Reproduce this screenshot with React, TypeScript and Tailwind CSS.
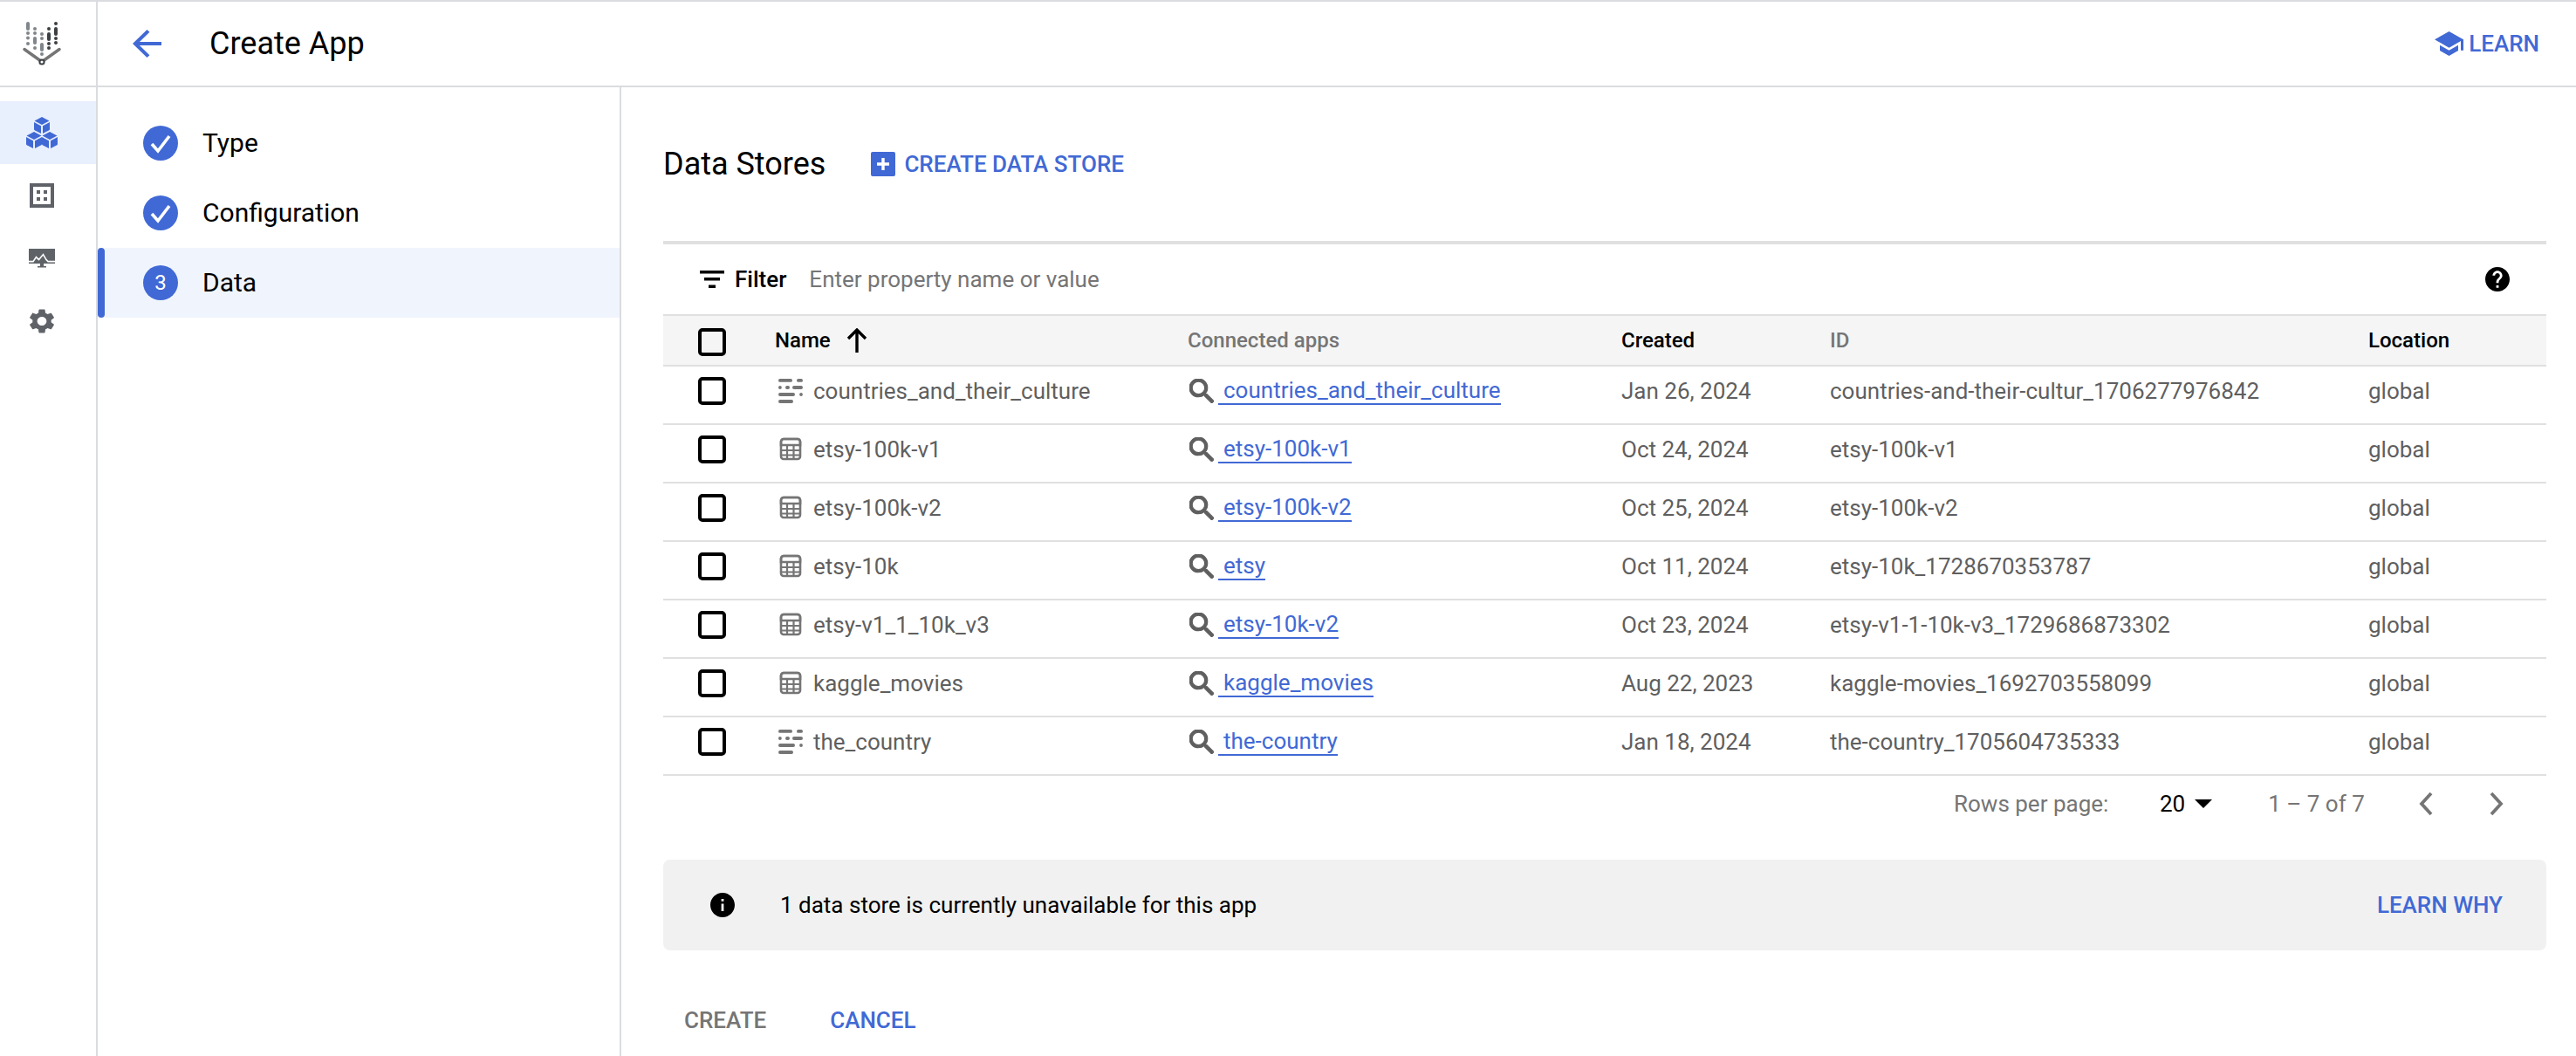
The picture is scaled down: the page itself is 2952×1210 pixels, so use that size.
import React from "react";

const BLUE = "#4169d5";

function Check() {
  return (
    <svg width="40" height="40" viewBox="0 0 40 40" className="block">
      <circle cx="20" cy="20" r="20" fill={BLUE} />
      <path d="M10 21l7 8 13-17" fill="none" stroke="#fff" strokeWidth="3.6" />
    </svg>
  );
}

function Logo() {
  const light = "#80868b";
  const dark = "#3c4043";
  const dots: [number, number, string][] = [
    [32, 38, light], [32, 43.5, light], [32, 50, light],
    [40, 33, light], [40, 38, light], [40, 55, light],
    [48, 39, light], [48, 44, light], [48, 62, light],
    [56, 33, dark], [56, 50, dark], [56, 55, dark],
    [64, 27, dark], [64, 44, dark], [64, 49, dark],
  ];
  const bars: [number, number, number, string][] = [
    [32, 27, 33, light], [40, 44, 49, light], [48, 51, 57, light], [56, 39, 45, dark], [64, 33, 39, dark],
  ];
  return (
    <svg width="44" height="50" viewBox="26 25 44 50" className="block">
      {dots.map(([x, y, c], i) => <circle key={i} cx={x} cy={y} r="2" fill={c} />)}
      {bars.map(([x, a, b, c], i) => <line key={i} x1={x} y1={a} x2={x} y2={b} stroke={c} strokeWidth="4" strokeLinecap="round" />)}
      <path d="M28 56.5L45.5 69M68 56.5L50.5 69" stroke="#757575" strokeWidth="3.4" strokeLinecap="round" fill="none" />
      <circle cx="48" cy="71" r="2.6" fill="#fff" stroke="#3c4043" strokeWidth="2" />
    </svg>
  );
}

function Cubes() {
  const cube = (x: number, y: number) => (
    <g transform={`translate(${x} ${y})`}>
      <path d="M9 0l8.5 4.6L9 9 .5 4.6z" />
      <path d="M0 6l8 4.2V19L1.2 15.6Q0 15 0 14z" />
      <path d="M18 6l-8 4.2V19l6.8-3.4Q18 15 18 14z" />
    </g>
  );
  return (
    <svg width="36" height="36" viewBox="0 0 36 36" fill={BLUE} className="block">
      {cube(9, 0)}
      {cube(0, 17)}
      {cube(18, 17)}
    </svg>
  );
}

function Building() {
  return (
    <svg width="28" height="28" viewBox="0 0 28 28" className="block">
      <path fillRule="evenodd" fill="#5f6368" d="M0 0h28v28H0zM4 4v20h20V4z" />
      <path fill="#5f6368" d="M8 8h4v4H8zM16 8h4v4h-4zM8 16h4v4H8zM16 16h4v4h-4z" />
    </svg>
  );
}

function Monitor() {
  return (
    <svg width="30" height="22" viewBox="0 0 30 22" className="block">
      <path fill="#5f6368" d="M0 0h30v17H0zM13 17h4v3h-4zM10 20h10v1.6H10z" />
      <path fill="none" stroke="#fff" strokeWidth="1.6" d="M0 14.6h5l3.5-5 3 3 5-6 3.5 6 2 2H30" />
    </svg>
  );
}

function Gear() {
  return (
    <svg width="28" height="28" viewBox="2.6 2 18.8 20" fill="#5f6368" preserveAspectRatio="none" className="block">
      <path d="M19.14 12.94c.04-.3.06-.61.06-.94 0-.32-.02-.64-.07-.94l2.03-1.58c.18-.14.23-.41.12-.61l-1.92-3.32c-.12-.22-.37-.29-.59-.22l-2.39.96c-.5-.38-1.03-.7-1.62-.94l-.36-2.54c-.04-.24-.24-.41-.48-.41h-3.84c-.24 0-.43.17-.47.41l-.36 2.54c-.59.24-1.13.57-1.62.94l-2.39-.96c-.22-.08-.47 0-.59.22L2.74 8.87c-.12.21-.08.47.12.61l2.03 1.58c-.05.3-.09.63-.09.94s.02.64.07.94l-2.03 1.58c-.18.14-.23.41-.12.61l1.92 3.32c.12.22.37.29.59.22l2.39-.96c.5.38 1.03.7 1.62.94l.36 2.54c.05.24.24.41.48.41h3.84c.24 0 .44-.17.47-.41l.36-2.54c.59-.24 1.13-.56 1.62-.94l2.39.96c.22.08.47 0 .59-.22l1.92-3.32c.12-.22.07-.47-.12-.61l-2.01-1.58zM12 15.6c-1.98 0-3.6-1.62-3.6-3.6s1.62-3.6 3.6-3.6 3.6 1.62 3.6 3.6-1.62 3.6-3.6 3.6z" />
    </svg>
  );
}

function Checkbox() {
  return <div className="w-[32px] h-[32px] border-[4px] border-black rounded-[5px] shrink-0" />;
}

function SearchIcon() {
  return (
    <svg width="28" height="28" viewBox="3 3 17.5 17.5" fill="#5f5f5f" stroke="#5f5f5f" strokeWidth="0.7" className="block shrink-0">
      <path d="M15.5 14h-.79l-.28-.27C15.41 12.59 16 11.11 16 9.5 16 5.91 13.09 3 9.5 3S3 5.91 3 9.5 5.91 16 9.5 16c1.61 0 3.09-.59 4.23-1.57l.27.28v.79l5 4.99L20.49 19l-4.99-5zm-6 0C7.01 14 5 11.99 5 9.5S7.01 5 9.5 5 14 7.01 14 9.5 11.99 14 9.5 14z" />
    </svg>
  );
}

function ListIcon() {
  return (
    <svg width="28" height="28" viewBox="0 0 28 28" fill="#757575" className="block shrink-0">
      <rect x="0" y="0" width="16" height="3.8" rx="1.9" />
      <rect x="21" y="0" width="7" height="3.8" rx="1.9" />
      <circle cx="1.9" cy="10" r="1.9" />
      <rect x="8" y="8.1" width="5" height="3.8" rx="1.9" />
      <rect x="16" y="8.1" width="12" height="3.8" rx="1.9" />
      <rect x="0" y="16.1" width="19" height="3.8" rx="1.9" />
      <circle cx="26" cy="18" r="1.9" />
      <rect x="0" y="24.1" width="17" height="3.8" rx="1.9" />
    </svg>
  );
}

function TableIcon() {
  return (
    <svg width="28" height="28" viewBox="0 0 28 28" className="block shrink-0">
      <rect x="3" y="2" width="22" height="23" rx="3" fill="none" stroke="#757575" strokeWidth="2.6" />
      <path d="M3 9h22v-4a3 3 0 0 0-3-3H6a3 3 0 0 0-3 3z" fill="none" stroke="#757575" strokeWidth="2.6" />
      <path d="M3 15h22M3 20.5h22M10 9v16M17.5 9v16" stroke="#757575" strokeWidth="2.2" fill="none" />
    </svg>
  );
}

const COLS = "grid grid-cols-[129px_472px_497px_239px_617px_1fr]";

const rows = [
  ["list", "countries_and_their_culture", "countries_and_their_culture", "Jan 26, 2024", "countries-and-their-cultur_1706277976842"],
  ["table", "etsy-100k-v1", "etsy-100k-v1", "Oct 24, 2024", "etsy-100k-v1"],
  ["table", "etsy-100k-v2", "etsy-100k-v2", "Oct 25, 2024", "etsy-100k-v2"],
  ["table", "etsy-10k", "etsy", "Oct 11, 2024", "etsy-10k_1728670353787"],
  ["table", "etsy-v1_1_10k_v3", "etsy-10k-v2", "Oct 23, 2024", "etsy-v1-1-10k-v3_1729686873302"],
  ["table", "kaggle_movies", "kaggle_movies", "Aug 22, 2023", "kaggle-movies_1692703558099"],
  ["list", "the_country", "the-country", "Jan 18, 2024", "the-country_1705604735333"],
];

export default function App() {
  return (
    <div className="h-[1210px] w-full overflow-hidden bg-white border-t-2 border-[#dadce0] flex font-[Roboto,sans-serif] text-[26px] text-[#5f5f5f]">
      <aside className="w-[112px] shrink-0 border-r-2 border-[#dadce0] flex flex-col">
        <div className="h-[98px] border-b-2 border-[#dadce0] flex items-center justify-center pr-[14px]">
          <Logo />
        </div>
        <nav className="pt-[16px] flex flex-col">
          <div className="h-[72px] bg-[#e8f0fe] flex items-center justify-center pr-[14px]"><Cubes /></div>
          <div className="h-[72px] flex items-center justify-center pr-[14px]"><Building /></div>
          <div className="h-[72px] flex items-center justify-center pr-[14px]"><Monitor /></div>
          <div className="h-[72px] flex items-center justify-center pr-[14px]"><Gear /></div>
        </nav>
      </aside>

      <div className="flex-1 flex flex-col min-w-0">
        <header className="h-[98px] shrink-0 border-b-2 border-[#dadce0] flex items-center pl-[40px] pr-[42px]">
          <svg width="33" height="32" viewBox="4 4 16 16" fill={BLUE} preserveAspectRatio="none" className="block">
            <path d="M20 11H7.83l5.59-5.59L12 4l-8 8 8 8 1.41-1.41L7.83 13H20v-2z" />
          </svg>
          <h1 className="ml-[55px] text-[36px] text-black font-normal leading-none">Create App</h1>
          <div className="ml-auto flex items-center gap-[6px] text-[#4169d5] font-medium">
            <svg width="33" height="28" viewBox="1 3 22 18" fill={BLUE} preserveAspectRatio="none" className="block">
              <path d="M5 13.18v4L12 21l7-3.82v-4L12 17l-7-3.82zM12 3L1 9l11 6 9-4.91V17h2V9L12 3z" />
            </svg>
            <span>LEARN</span>
          </div>
        </header>

        <div className="flex-1 flex min-h-0">
          <section className="w-[600px] shrink-0 border-r-2 border-[#dadce0] pt-[24px] text-[30px] text-black">
            <div className="h-[80px] flex items-center pl-[52px] gap-[28px]"><Check /><span className="-translate-y-[1px]">Type</span></div>
            <div className="h-[80px] flex items-center pl-[52px] gap-[28px]"><Check /><span className="-translate-y-[1px]">Configuration</span></div>
            <div className="h-[80px] flex items-center">
              <div className="w-[8px] h-full bg-[#4169d5] rounded-[4px] shrink-0" />
              <div className="flex-1 h-full bg-[#f0f5fd] flex items-center pl-[44px] gap-[28px]">
                <div className="w-[40px] h-[40px] rounded-full bg-[#4169d5] text-white text-[24px] flex items-center justify-center">3</div>
                <span className="-translate-y-[1px]">Data</span>
              </div>
            </div>
          </section>

          <main className="flex-1 min-w-0 pl-[48px] pr-[34px] pt-[60px]">
            <div className="h-[56px] flex items-center">
              <h2 className="text-[36px] text-black font-normal leading-none">Data Stores</h2>
              <div className="ml-[52px] flex items-center gap-[10px] text-[#4169d5] font-medium">
                <svg width="28" height="28" viewBox="0 0 28 28" className="block">
                  <rect width="28" height="28" rx="2" fill={BLUE} />
                  <path d="M14 7v14M7 14h14" stroke="#fff" strokeWidth="3.4" />
                </svg>
                <span>CREATE DATA STORE</span>
              </div>
            </div>

            <div className="mt-[60px] border-t-4 border-[#e0e0e0]">
              <div className="h-[80px] flex items-center pl-[42px] pr-[42px]">
                <svg width="28" height="20" viewBox="0 0 28 20" fill="#000" className="block">
                  <path d="M0 0h28v3.4H0zM5 8h18v3.4H5zM10 16.6h8V20h-8z" />
                </svg>
                <span className="ml-[12px] text-black font-medium">Filter</span>
                <span className="ml-[26px] text-[#757575]">Enter property name or value</span>
                <svg width="28" height="28" viewBox="2 2 20 20" className="ml-auto block" fill="#000">
                  <path d="M12 2C6.48 2 2 6.48 2 12s4.48 10 10 10 10-4.48 10-10S17.52 2 12 2zm1 17h-2v-2h2v2zm2.07-7.75l-.9.92C13.45 12.9 13 13.5 13 15h-2v-.5c0-1.1.45-2.1 1.17-2.83l1.24-1.26c.37-.36.59-.86.59-1.41 0-1.1-.9-2-2-2s-2 .9-2 2H8c0-2.21 1.79-4 4-4s4 1.79 4 4c0 .88-.36 1.68-.93 2.25z" />
                </svg>
              </div>

              <div className={`${COLS} h-[60px] items-center bg-[#f5f5f5] border-y-2 border-[#e0e0e0] text-[24px] font-medium`}>
                <div className="pl-[40px]"><div className="translate-y-[2px]"><Checkbox /></div></div>
                <div className="text-black flex items-center -ml-[1px]">
                  <span>Name</span>
                  <svg width="24" height="28" viewBox="0 0 24 28" className="ml-[18px] block">
                    <path d="M12 2v26M2 12L12 2l10 10" fill="none" stroke="#000" strokeWidth="3.4" />
                  </svg>
                </div>
                <div className="text-[#757575]">Connected apps</div>
                <div className="text-black">Created</div>
                <div className="text-[#757575]">ID</div>
                <div className="text-black">Location</div>
              </div>

              {rows.map(([kind, name, app, created, id]) => (
                <div key={name} className={`${COLS} h-[67px] pb-[9px] items-center border-b-2 border-[#e0e0e0] text-[#5f5f5f]`}>
                  <div className="pl-[40px]"><Checkbox /></div>
                  <div className="flex items-center gap-[12px] pl-[3px]">
                    {kind === "list" ? <ListIcon /> : <TableIcon />}
                    <span>{name}</span>
                  </div>
                  <div className="flex items-center gap-[5px] pl-[2px]">
                    <SearchIcon />
                    <span className="pl-[6px] leading-[30px] border-b-2 border-[#4169d5] text-[#4169d5]">{app}</span>
                  </div>
                  <div>{created}</div>
                  <div>{id}</div>
                  <div>global</div>
                </div>
              ))}

              <div className="h-[64px] flex items-center text-[26px] text-[#757575]">
                <span className="ml-[1479px] w-[236px]">Rows per page:</span>
                <span className="text-black">20</span>
                <svg width="20" height="10" viewBox="0 0 20 10" fill="#000" className="ml-[11px] block">
                  <path d="M0 0h20L10 10z" />
                </svg>
                <span className="ml-[64px] w-[172px]">1 – 7 of 7</span>
                <svg width="18" height="28" viewBox="0 0 18 28" fill="none" stroke="#757575" strokeWidth="3.8" className="block">
                  <path d="M15 2L4 14l11 12" />
                </svg>
                <svg width="18" height="28" viewBox="0 0 18 28" fill="none" stroke="#757575" strokeWidth="3.8" className="ml-[63px] block">
                  <path d="M3 2l11 12L3 26" />
                </svg>
              </div>
            </div>

            <div className="mt-[32px] h-[104px] rounded-[8px] bg-[#f1f1f1] flex items-center pl-[54px] pr-[50px]">
              <svg width="28" height="28" viewBox="2 2 20 20" fill="#000" className="block">
                <path d="M12 2C6.48 2 2 6.48 2 12s4.48 10 10 10 10-4.48 10-10S17.52 2 12 2zm1 15h-2v-6h2v6zm0-8h-2V7h2v2z" />
              </svg>
              <span className="ml-[52px] text-black">1 data store is currently unavailable for this app</span>
              <span className="ml-auto text-[#4169d5] font-medium">LEARN WHY</span>
            </div>

            <div className="mt-[60px] flex items-center font-medium pl-[24px] leading-[40px]">
              <span className="text-[#757575]">CREATE</span>
              <span className="ml-[73px] text-[#4169d5]">CANCEL</span>
            </div>
          </main>
        </div>
      </div>
    </div>
  );
}
